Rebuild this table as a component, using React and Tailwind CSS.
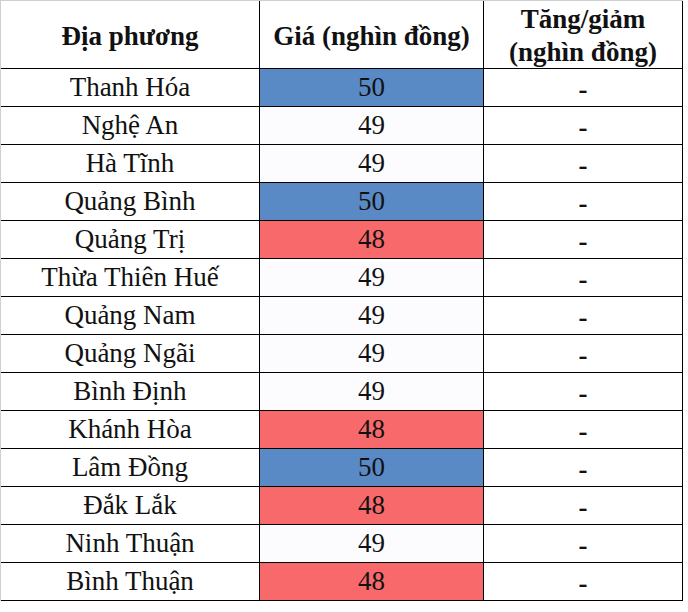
const rows = [
  ["Thanh Hóa", "50"],
  ["Nghệ An", "49"],
  ["Hà Tĩnh", "49"],
  ["Quảng Bình", "50"],
  ["Quảng Trị", "48"],
  ["Thừa Thiên Huế", "49"],
  ["Quảng Nam", "49"],
  ["Quảng Ngãi", "49"],
  ["Bình Định", "49"],
  ["Khánh Hòa", "48"],
  ["Lâm Đồng", "50"],
  ["Đắk Lắk", "48"],
  ["Ninh Thuận", "49"],
  ["Bình Thuận", "48"],
];

const fill = {
  "50": "bg-[#5a8ac6]",
  "49": "bg-[#fcfcff]",
  "48": "bg-[#f8696b]",
};

export default function App() {
  return (
    <div className="w-[688px] h-[612px] bg-white font-[family-name:Liberation_Serif] text-[#111]">
      <div className="w-[683px] border-l border-t border-[#cfcfcf]">
        {/* Header */}
        <div className="grid grid-cols-[259px_224px_199px] grid-rows-[68px] h-[68px] text-[27px] font-bold leading-none">
          <div className="flex items-center justify-center border-r border-b border-black pt-1">
            Địa phương
          </div>
          <div className="flex items-center justify-center border-r border-b border-black pt-1">
            Giá (nghìn đồng)
          </div>
          <div className="flex flex-col items-center justify-center border-r border-b border-black leading-[33px] pt-0.5">
            <span>Tăng/giảm</span>
            <span>(nghìn đồng)</span>
          </div>
        </div>

        {/* Rows */}
        {rows.map(([name, price]) => (
          <div
            key={name}
            className="grid grid-cols-[259px_224px_199px] grid-rows-[38px] h-[38px] text-[27px] leading-none"
          >
            <div className="flex items-center justify-center border-r border-b border-black">
              {name}
            </div>
            <div
              className={`flex items-center justify-center border-r border-b border-black ${fill[price]}`}
            >
              {price}
            </div>
            <div className="flex items-center justify-center border-r border-b border-black font-bold pt-1">
              -
            </div>
          </div>
        ))}
      </div>
    </div>
  );
}
